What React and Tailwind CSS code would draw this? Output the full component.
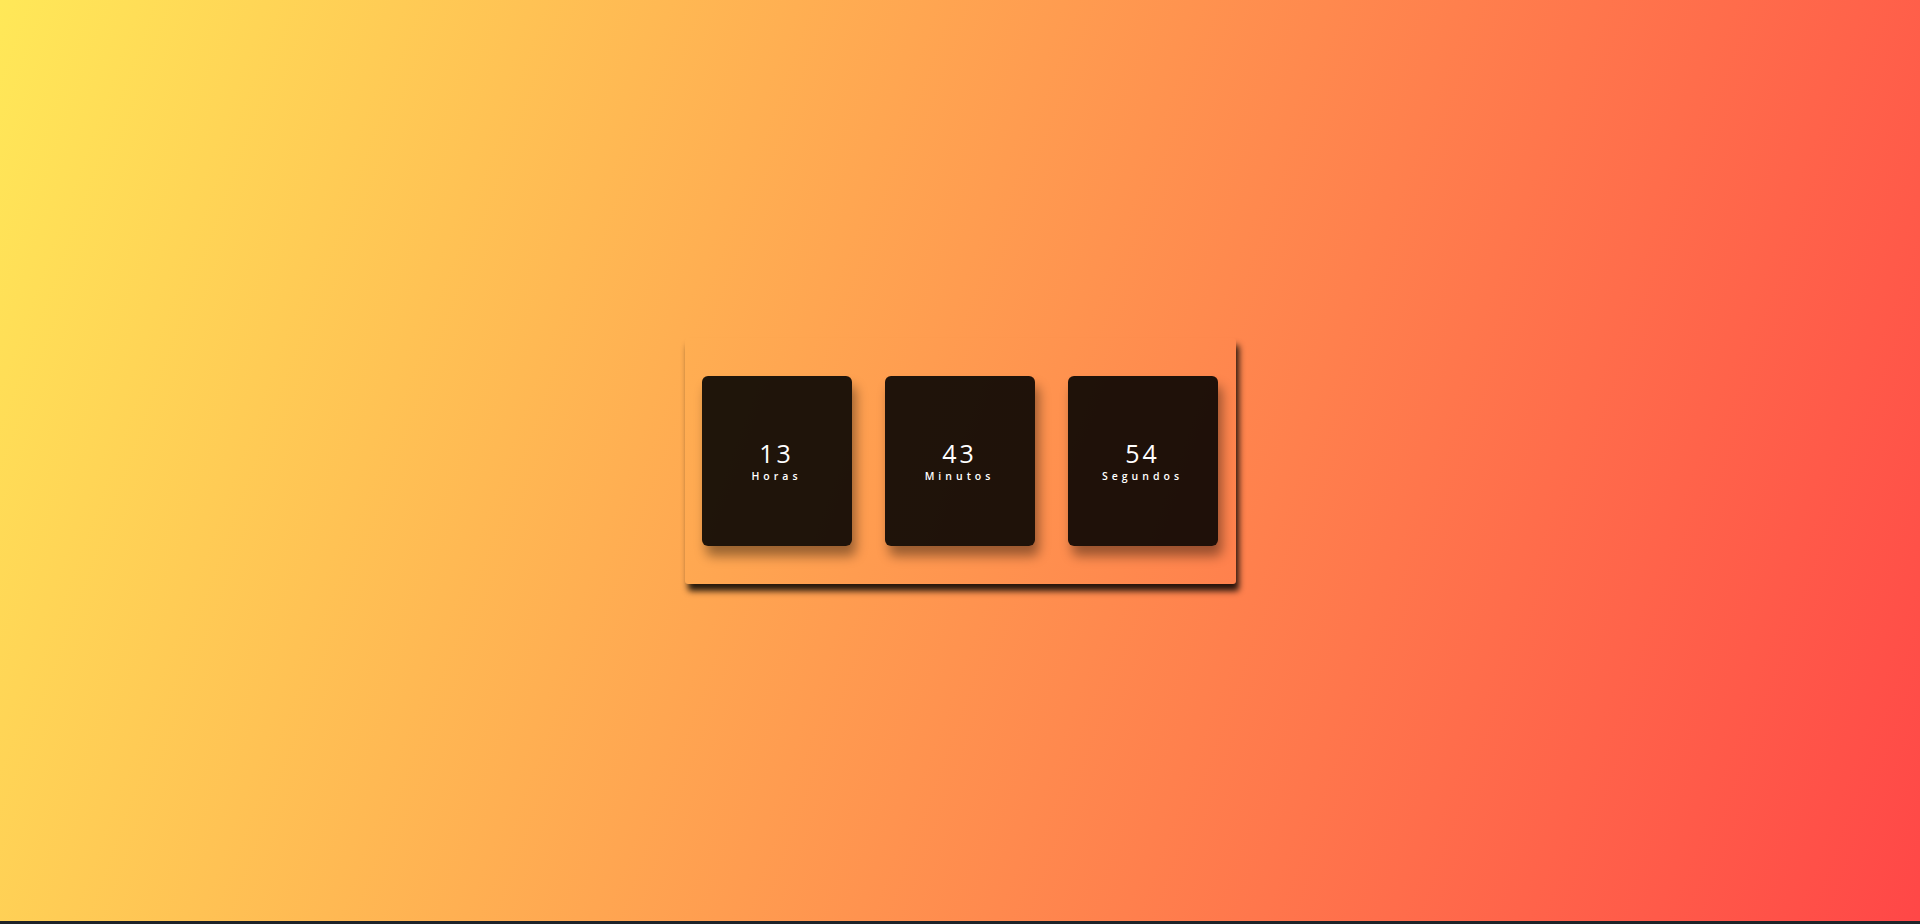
export default function App() {
  const units = [
    { value: '13', label: 'Horas' },
    { value: '43', label: 'Minutos' },
    { value: '54', label: 'Segundos' },
  ];

  return (
    <div className="min-h-screen bg-[#1f2328]">
      <div className="h-[921px] w-full flex items-center justify-center bg-[linear-gradient(110deg,#ffe858_0%,#ff4747_100%)] font-['Open_Sans',sans-serif]">
        <div className="flex gap-[33px] pl-[17px] pr-[18px] py-[38px] rounded-[3px] shadow-[3px_7px_6px_rgba(0,0,0,0.85)]">
          {units.map((u) => (
            <TimeCard key={u.label} value={u.value} label={u.label} />
          ))}
        </div>
      </div>
    </div>
  );
}

function TimeCard({ value, label }) {
  return (
    <div className="w-[150px] h-[170px] rounded-md bg-black/[0.88] flex flex-col items-center justify-center shadow-[4px_10px_12px_rgba(0,0,0,0.4)]">
      <span className="text-[25px] leading-[28px] tracking-[3px] text-white">{value}</span>
      <span className="mt-[2px] text-[10.5px] leading-[14px] font-semibold tracking-[4px] text-white">{label}</span>
    </div>
  );
}
